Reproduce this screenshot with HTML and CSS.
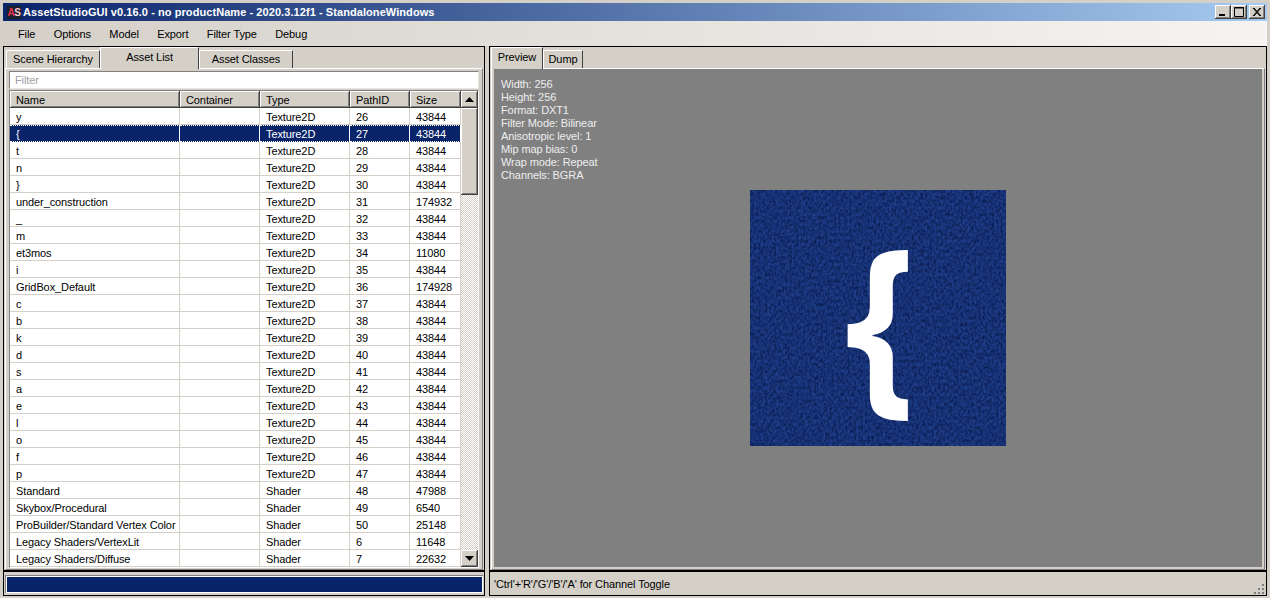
FILE: index.html
```html
<!DOCTYPE html>
<html lang="en">
<head>
  <meta charset="UTF-8">
  <title>AssetStudioGUI</title>
  <link rel="stylesheet" href="styles.css">
</head>
<body>
  <div class="titlebar">
    <span class="app-icon"><span class="as-a">A</span><span class="as-s">S</span></span>
    <span class="title-text">AssetStudioGUI v0.16.0 - no productName - 2020.3.12f1 - StandaloneWindows</span>
    <div class="win-btns">
      <span class="win-btn"><svg width="16" height="14"><rect x="4" y="9" width="6" height="2" fill="#000"/></svg></span>
      <span class="win-btn"><svg width="16" height="14"><path d="M3.5 2.5h9v9h-9z M3 3h10" fill="none" stroke="#000"/></svg></span>
      <span class="win-btn win-close"><svg width="16" height="14"><path d="M4 3l7 8M5 3l7 8M11 3l-7 8M12 3l-7 8" fill="none" stroke="#000"/></svg></span>
    </div>
  </div>

  <div class="menubar">
    <span>File</span><span>Options</span><span>Model</span><span>Export</span><span>Filter Type</span><span>Debug</span>
  </div>

  <div class="main">
    <div class="col-left">
      <div class="pane pane-top">
        <div class="tabs">
          <span class="tab tab-scene">Scene Hierarchy</span>
          <span class="tab tab-active tab-assets">Asset List</span>
          <span class="tab tab-classes">Asset Classes</span>
        </div>
        <div class="tab-body">
          <div class="filter">Filter</div>
          <div class="listview">
            <div class="list-main">
              <table class="assets">
                <thead>
                  <tr><th class="c-name">Name</th><th class="c-cont">Container</th><th class="c-type">Type</th><th class="c-path">PathID</th><th class="c-size">Size</th></tr>
                </thead>
                <tbody>
                  <tr><td>y</td><td></td><td>Texture2D</td><td>26</td><td>43844</td></tr>
                  <tr class="sel"><td>{</td><td></td><td>Texture2D</td><td>27</td><td>43844</td></tr>
                  <tr><td>t</td><td></td><td>Texture2D</td><td>28</td><td>43844</td></tr>
                  <tr><td>n</td><td></td><td>Texture2D</td><td>29</td><td>43844</td></tr>
                  <tr><td>}</td><td></td><td>Texture2D</td><td>30</td><td>43844</td></tr>
                  <tr><td>under_construction</td><td></td><td>Texture2D</td><td>31</td><td>174932</td></tr>
                  <tr><td>_</td><td></td><td>Texture2D</td><td>32</td><td>43844</td></tr>
                  <tr><td>m</td><td></td><td>Texture2D</td><td>33</td><td>43844</td></tr>
                  <tr><td>et3mos</td><td></td><td>Texture2D</td><td>34</td><td>11080</td></tr>
                  <tr><td>i</td><td></td><td>Texture2D</td><td>35</td><td>43844</td></tr>
                  <tr><td>GridBox_Default</td><td></td><td>Texture2D</td><td>36</td><td>174928</td></tr>
                  <tr><td>c</td><td></td><td>Texture2D</td><td>37</td><td>43844</td></tr>
                  <tr><td>b</td><td></td><td>Texture2D</td><td>38</td><td>43844</td></tr>
                  <tr><td>k</td><td></td><td>Texture2D</td><td>39</td><td>43844</td></tr>
                  <tr><td>d</td><td></td><td>Texture2D</td><td>40</td><td>43844</td></tr>
                  <tr><td>s</td><td></td><td>Texture2D</td><td>41</td><td>43844</td></tr>
                  <tr><td>a</td><td></td><td>Texture2D</td><td>42</td><td>43844</td></tr>
                  <tr><td>e</td><td></td><td>Texture2D</td><td>43</td><td>43844</td></tr>
                  <tr><td>l</td><td></td><td>Texture2D</td><td>44</td><td>43844</td></tr>
                  <tr><td>o</td><td></td><td>Texture2D</td><td>45</td><td>43844</td></tr>
                  <tr><td>f</td><td></td><td>Texture2D</td><td>46</td><td>43844</td></tr>
                  <tr><td>p</td><td></td><td>Texture2D</td><td>47</td><td>43844</td></tr>
                  <tr><td>Standard</td><td></td><td>Shader</td><td>48</td><td>47988</td></tr>
                  <tr><td>Skybox/Procedural</td><td></td><td>Shader</td><td>49</td><td>6540</td></tr>
                  <tr><td>ProBuilder/Standard Vertex Color</td><td></td><td>Shader</td><td>50</td><td>25148</td></tr>
                  <tr><td>Legacy Shaders/VertexLit</td><td></td><td>Shader</td><td>6</td><td>11648</td></tr>
                  <tr><td>Legacy Shaders/Diffuse</td><td></td><td>Shader</td><td>7</td><td>22632</td></tr>
                </tbody>
              </table>
            </div>
            <div class="scrollbar">
              <span class="sb-btn"><svg width="9" height="5"><path d="M4.5 0L9 5H0z" fill="#000"/></svg></span>
              <span class="sb-thumb"></span>
              <span class="sb-track"></span>
              <span class="sb-btn"><svg width="9" height="5"><path d="M0 0h9L4.5 5z" fill="#000"/></svg></span>
            </div>
          </div>
        </div>
      </div>
      <div class="pane pane-status">
        <div class="progress"><div class="progress-fill"></div></div>
      </div>
    </div>

    <div class="col-right">
      <div class="pane pane-top">
        <div class="tabs tabs-right">
          <span class="tab tab-active tab-preview">Preview</span>
          <span class="tab tab-dump">Dump</span>
        </div>
        <div class="tab-body tab-body-right">
          <div class="preview">
            <div class="info">
              <div>Width: 256</div>
              <div>Height: 256</div>
              <div>Format: DXT1</div>
              <div>Filter Mode: Bilinear</div>
              <div>Anisotropic level: 1</div>
              <div>Mip map bias: 0</div>
              <div>Wrap mode: Repeat</div>
              <div>Channels: BGRA</div>
            </div>
            <div class="texture">
              <svg class="noise" width="256" height="256">
                <filter id="grain" x="0" y="0" width="100%" height="100%" color-interpolation-filters="sRGB">
                  <feTurbulence type="fractalNoise" baseFrequency="0.45 0.3" numOctaves="5" seed="11"/>
                  <feColorMatrix type="matrix" values="0 0 0 0 0.05  0 0 0 0 0.13  0 0 0 0 0.35  1.6 1.6 0 0 -1.15"/>
                </filter>
                <rect width="256" height="256" fill="#1e3d88"/>
                <rect width="256" height="256" filter="url(#grain)"/>
              </svg>
              <span class="glyph">{</span>
            </div>
          </div>
        </div>
      </div>
      <div class="pane pane-status status-right">
        <span>'Ctrl'+'R'/'G'/'B'/'A' for Channel Toggle</span>
        <svg class="grip" width="12" height="12">
          <g fill="#808080"><rect x="9" y="1" width="2" height="2"/><rect x="5" y="5" width="2" height="2"/><rect x="9" y="5" width="2" height="2"/><rect x="1" y="9" width="2" height="2"/><rect x="5" y="9" width="2" height="2"/><rect x="9" y="9" width="2" height="2"/></g>
        </svg>
      </div>
    </div>
  </div>
</body>
</html>
```
FILE: styles.css
```css
* { box-sizing: border-box; }
html, body { margin: 0; height: 598px; overflow: hidden; }
body { padding: 3px 3px 3px 3px; background: #d4d0c8; font-family: "Liberation Sans", Arial, sans-serif; font-size: 11px; letter-spacing: -0.1px; color: #000; display: flex; flex-direction: column; }

/* title bar */
.titlebar { height: 18px; flex: none; display: flex; align-items: center; padding: 0 2px 0 4px; background: linear-gradient(to right, #0a246a, #a6caf0); letter-spacing: 0; }
.app-icon { width: 14px; height: 13px; background: #1b1e2c; font: bold 10px/13px "Liberation Sans", sans-serif; text-align: center; letter-spacing: -0.5px; }
.as-a { color: #e8344a; }
.as-s { color: #f6c8cf; }
.title-text { margin-left: 2px; color: #fff; font: bold 11px "Liberation Sans", sans-serif; letter-spacing: 0.07px; white-space: nowrap; flex: 1; }
.win-btns { display: flex; gap: 0; }
.win-btn { width: 16px; height: 14px; display: block; background: #d4d0c8; box-shadow: inset -1px -1px 0 #404040, inset 1px 1px 0 #fff, inset -2px -2px 0 #808080; }
.win-btn svg { display: block; }
.win-close { margin-left: 2px; }

/* menu */
.menubar { height: 25px; flex: none; display: flex; align-items: center; gap: 18.4px; padding: 1px 0 0 15px; background: linear-gradient(to right, #d4d0c8, #f5f4f2); }

/* panes */
.main { flex: 1; display: flex; gap: 4px; min-height: 0; padding-right: 0; }
.col-left { width: 482px; flex: none; display: flex; flex-direction: column; }
.col-right { width: 778px; flex: none; display: flex; flex-direction: column; }
.pane { border: 1px solid #000; }
.pane-top { height: 526px; flex: none; display: flex; flex-direction: column; border-bottom-width: 2px; }
.pane-status { height: 24px; flex: none; border-top: 0; }

/* tabs */
.tabs { height: 22px; flex: none; display: flex; padding-left: 2px; position: relative; z-index: 1; }
.tab { height: 18px; margin-top: 3px; text-align: center; line-height: 16px; background: #d4d0c8; border: 1px solid #fff; border-right-color: #404040; border-bottom: 0; }
.tab-active { height: 22px; margin-top: 0; line-height: 18px; border-right-color: #404040; }
.tab-scene { width: 94px; }
.tab-assets { width: 99px; }
.tab-classes { width: 94px; }
.tabs-right { padding-left: 1px; }
.tab-preview { width: 52px; }
.tab-dump { width: 40px; }

.tab-body { flex: 1; min-height: 0; margin: -1px 1px 0 1px; padding: 2px 3px 1px 3px; border: 1px solid #fff; border-right-color: #808080; border-bottom-color: #808080; display: flex; flex-direction: column; gap: 1px; }
.tab-body-right { padding: 0 2px 2px 2px; }

/* filter + list */
.filter { height: 18px; flex: none; background: #fff; color: #a0a0a0; padding-left: 5px; line-height: 17px; border: 1px solid #808080; border-right-color: #e8e6e2; border-bottom-color: #e8e6e2; }
.listview { flex: 1; min-height: 0; display: flex; background: #fff; border: 1px solid #808080; border-right-color: #fff; border-bottom-color: #fff; }
.list-main { width: 451px; flex: none; overflow: hidden; }
.assets { width: 451px; table-layout: fixed; border-collapse: separate; border-spacing: 0; }
.assets th { height: 17px; padding: 0 0 0 6px; font-weight: normal; text-align: left; background: #d4d0c8; box-shadow: inset -1px -1px 0 #404040, inset 1px 1px 0 #fff, inset -2px -2px 0 #808080; }
.assets td { height: 17px; padding: 1px 0 0 6px; white-space: nowrap; overflow: hidden; border-right: 1px solid #d4d0c8; border-bottom: 1px solid #d4d0c8; }
.c-name { width: 170px; }
.c-cont { width: 80px; }
.c-type { width: 90px; }
.c-path { width: 60px; }
.c-size { width: 51px; }
.assets tr.sel td { padding-top: 0; background: #0a246a; color: #fff; border-right-color: #fff; border-bottom: 1px dotted #fff; border-top: 1px dotted #fff; }

.scrollbar { width: 17px; flex: none; display: flex; flex-direction: column; }
.sb-btn { height: 17px; flex: none; display: flex; align-items: center; justify-content: center; background: #d4d0c8; box-shadow: inset -1px -1px 0 #404040, inset 1px 1px 0 #fff, inset -2px -2px 0 #808080; }
.sb-thumb { height: 87px; flex: none; background: #d4d0c8; box-shadow: inset -1px -1px 0 #404040, inset 1px 1px 0 #fff, inset -2px -2px 0 #808080; }
.sb-track { flex: 1; background: repeating-conic-gradient(#d4d0c8 0 25%, #fff 0 50%) 0 0 / 2px 2px; }

/* status */
.progress { margin: 3px 1px 0 1px; height: 18px; padding: 1px; background: #fff; border-top: 1px solid #808080; border-left: 1px solid #808080; }
.progress-fill { height: 100%; background: #0a246a; }
.status-right { display: flex; align-items: center; justify-content: space-between; padding: 1px 1px 0 4px; }
.grip { align-self: flex-end; margin-bottom: 0; }

/* preview */
.preview { flex: 1; min-height: 0; background: #808080; position: relative; display: flex; align-items: center; justify-content: center; }
.info { position: absolute; left: 7px; top: 9px; color: #eee; line-height: 13px; }
.texture { width: 256px; height: 256px; margin-right: 1px; position: relative; }
.noise { display: block; }
.glyph { position: absolute; left: 0; right: 0; top: 0; bottom: 0; display: flex; align-items: center; justify-content: center; color: #fff; font: bold 195px "Open Sans", sans-serif; letter-spacing: 0; transform: translate(2px, -4px) scaleX(0.91); }
```
